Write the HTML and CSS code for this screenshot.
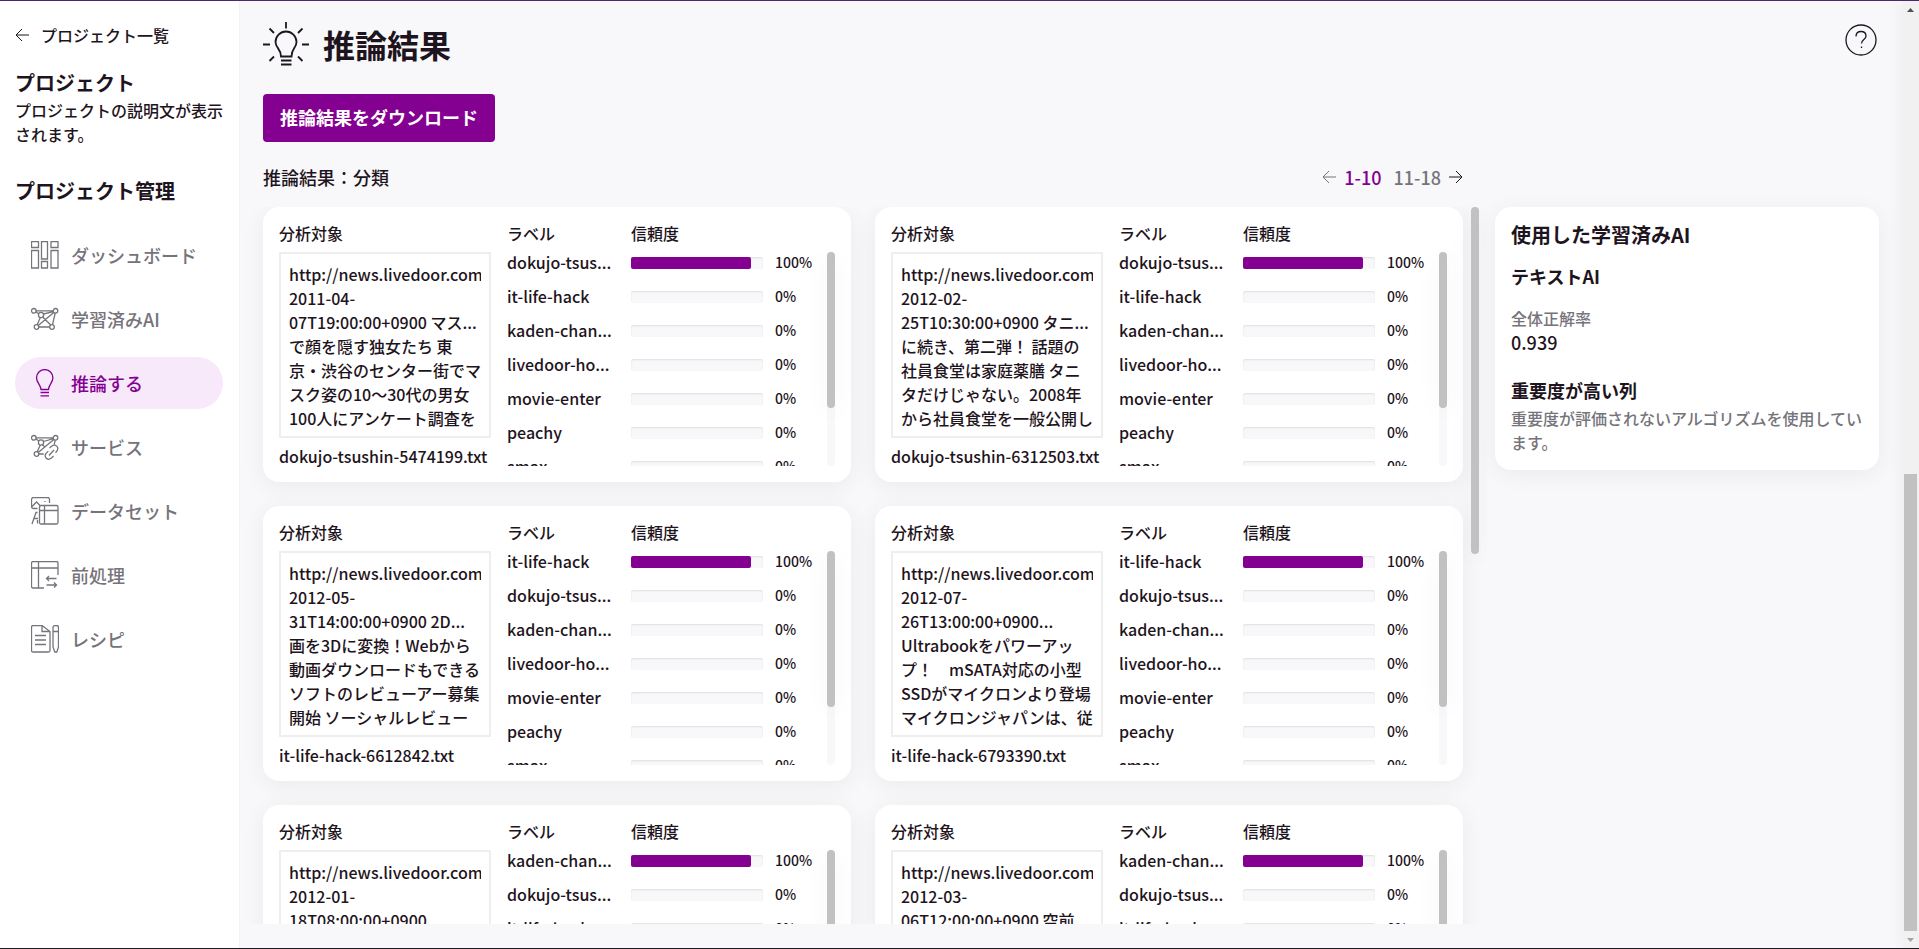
FILE: index.html
```html
<!DOCTYPE html>
<html lang="ja">
<head>
    <meta charset="UTF-8">
    <meta name="viewport" content="width=device-width, initial-scale=1.0">
    <link rel="stylesheet" href="styles.css">
    <title>推論結果</title>
</head>
<body>

<aside class="sidebar">
    <a class="back-link" href="#">
        <svg width="14" height="14" viewBox="0 0 14 14"><path d="M14 7H1M7 1L1 7l6 6"/></svg>
        <span>プロジェクト一覧</span>
    </a>
    <h2>プロジェクト</h2>
    <p>プロジェクトの説明文が表示されます。</p>
    <h2 class="nav-title">プロジェクト管理</h2>
    <nav>
        <a class="nav-item" href="#">
            <svg viewBox="0 0 28 28"><path d="M.5.5h7v6h-7zM.5 9.500h7v17.500h-7zM10.500.5h6v17.500h-6zM10.500 20.500h6v6.500h-6zM20 .5h7v6h-7zM20 9.500h7v17.500h-7z"/></svg>
            <span>ダッシュボード</span>
        </a>
        <a class="nav-item" href="#">
            <svg viewBox="0 0 28 28"><circle cx="2.800" cy="5.800" r="2.300"/><circle cx="24.500" cy="5.800" r="2.300"/><circle cx="10" cy="10" r="2.600"/><circle cx="5.500" cy="22" r="2.300"/><circle cx="21" cy="22" r="2.300"/><path d="M5 5.800h17M5 7l3 2M12.500 9l9.800-2.400M9.300 12.500L6.200 19.800M11.700 12l8 8M22.800 7.500L7.200 20.500M24.200 8l-2.700 11.700M7.800 22h11"/></svg>
            <span>学習済みAI</span>
        </a>
        <a class="nav-item active" href="#">
            <svg viewBox="0 0 28 28"><path d="M10 20.500C9.500 15.500 5.500 13.500 5.500 8.800a8.200 8.200 0 0 1 16.400 0C21.900 13.500 18 15.500 17.500 20.500zM9.500 23.500h8.500M9.500 26.800h8.500"/></svg>
            <span>推論する</span>
        </a>
        <a class="nav-item" href="#">
            <svg viewBox="0 0 28 28"><circle cx="2.800" cy="4.800" r="2.300"/><circle cx="24.500" cy="4.800" r="2.300"/><circle cx="10" cy="9.500" r="2.600"/><circle cx="5.500" cy="21" r="2.300"/><path d="M5 4.800h17M5 6l3 2M12.500 8.500l9.800-2.800M9.300 12L6.200 18.800M22.800 6.500L7.200 19.500M24.200 7.200l-1 4.500M11.500 11.800l2.500 2.500M7.800 21h5"/><path d="M18.500 15l1.800-1.500c3-2.500 6-1 6.500 1.500.3 2-.8 3.200-2.300 4.700M22.500 23l-2 2c-2 1.600-4 1.500-5.200.3-1.500-1.500-1.200-3.700 0-5.200l2-2M18 22.500l5-5.500"/></svg>
            <span>サービス</span>
        </a>
        <a class="nav-item" href="#">
            <svg viewBox="0 0 28 28"><path d="M6.500 11.500h-4a2 2 0 0 1-2-2v-7a2 2 0 0 1 2-2h14a2 2 0 0 1 2 2V6M1 9.500L5.500 5l4 4M14 4v1M1 27l4-11.500h1.500M3 21.500h4M6.500 23v3.500"/><rect x="8.500" y="8.500" width="18.500" height="18.500" rx="1.500"/><path d="M8.500 13.500h18.500M13.500 8.500v18.500"/></svg>
            <span>データセット</span>
        </a>
        <a class="nav-item" href="#">
            <svg viewBox="0 0 28 28"><path d="M13 27H2a1.500 1.500 0 0 1-1.500-1.500V2A1.500 1.500 0 0 1 2 .5h23.500A1.500 1.500 0 0 1 27 2v12M.5 7H27M7.500.5V27M25.500 17.500H15.500M18 15l-2.500 2.500L18 20M15.500 24H25.500M23 21.500l2.500 2.500-2.500 2.500"/></svg>
            <span>前処理</span>
        </a>
        <a class="nav-item" href="#">
            <svg viewBox="0 0 28 28"><path d="M11 .5H2A1.500 1.500 0 0 0 .5 2v23.500A1.500 1.500 0 0 0 2 27h15.500a1.500 1.500 0 0 0 1.500-1.500V6.500zM11 .5v6h8M4 10.500h11M4 15h11M4 19.500h11M22 2.500a2 2 0 0 1 2-2h1.500a2 2 0 0 1 2 2V22l-1.700 5h-2L22 22zM22 6.500h5.500"/></svg>
            <span>レシピ</span>
        </a>
    </nav>
</aside>

<main class="main">
    <header class="page-header">
        <svg class="title-icon" viewBox="0 0 46 46"><path d="M18 35.500C18 27.500 12.500 27 12.500 21a10.500 10.500 0 0 1 21 0C33.500 27 28.500 27.500 28.500 35.500zM18 39.500h10.500M18 43.500h10.500"/><path d="M23 1v6.500M6.500 7.500l4.500 4.500M39.500 7.500L35 12M0 23.500h7M39 23.500h7M6.500 40l4.500-4.500M39.500 40L35 35.500"/></svg>
        <h1>推論結果</h1>
        <button class="help" aria-label="ヘルプ">
            <svg width="36" height="36" viewBox="0 0 36 36"><circle cx="18" cy="18" r="15"/><path d="M13 14.500c0-3 2-5 5-5s5 1.800 5 4.500c0 3.500-4.500 3.500-4.500 7.500M18.500 24.500v1.500"/></svg>
        </button>
    </header>

    <div><button class="download">推論結果をダウンロード</button></div>

    <div class="columns">
        <section class="results">
            <div class="results-head">
                <span>推論結果：分類</span>
                <div class="pager">
                    <button class="prev" aria-label="前へ"><svg width="14" height="14" viewBox="0 0 14 14"><path d="M14 7H1M7 1L1 7l6 6"/></svg></button>
                    <a class="current" href="#">1-10</a>
                    <a href="#">11-18</a>
                    <button aria-label="次へ"><svg width="14" height="14" viewBox="0 0 14 14"><path d="M0 7h13M7 1l6 6-6 6"/></svg></button>
                </div>
            </div>
            <div class="results-scroll">
                <div class="cards" id="cards"></div>
                <div class="scroll-track outer"><div class="scroll-thumb"></div></div>
            </div>
        </section>

        <section class="model">
            <h2>使用した学習済みAI</h2>
            <h3>テキストAI</h3>
            <div class="sub">全体正解率</div>
            <div class="value">0.939</div>
            <h3 class="columns-title">重要度が高い列</h3>
            <p>重要度が評価されないアルゴリズムを使用しています。</p>
        </section>
    </div>
</main>

<div class="page-scroll">
    <svg width="17" height="17" viewBox="0 0 17 17"><path d="M5 11h7L8.500 7z" fill="#505050"/></svg>
    <div class="page-space"></div>
    <div class="page-thumb"></div>
    <svg width="17" height="17" viewBox="0 0 17 17"><path d="M5 7h7l-3.500 4z" fill="#a3a3a3"/></svg>
</div>

<script>
    const labels = ['dokujo-tsus...', 'it-life-hack', 'kaden-chan...', 'livedoor-ho...', 'movie-enter', 'peachy', 'smax'];

    const results = [
        { file: 'dokujo-tsushin-5474199.txt', label: 'dokujo-tsus...', lines: ['2011-04-', '07T19:00:00+0900 マス...', 'で顔を隠す独女たち 東', '京・渋谷のセンター街でマ', 'スク姿の10～30代の男女', '100人にアンケート調査を'] },
        { file: 'dokujo-tsushin-6312503.txt', label: 'dokujo-tsus...', lines: ['2012-02-', '25T10:30:00+0900 タニ...', 'に続き、第二弾！ 話題の', '社員食堂は家庭薬膳 タニ', 'タだけじゃない。2008年', 'から社員食堂を一般公開し'] },
        { file: 'it-life-hack-6612842.txt', label: 'it-life-hack', lines: ['2012-05-', '31T14:00:00+0900 2D...', '画を3Dに変換！Webから', '動画ダウンロードもできる', 'ソフトのレビューアー募集', '開始 ソーシャルレビュー'] },
        { file: 'it-life-hack-6793390.txt', label: 'it-life-hack', lines: ['2012-07-', '26T13:00:00+0900...', 'Ultrabookをパワーアッ', 'プ！　mSATA対応の小型', 'SSDがマイクロンより登場', 'マイクロンジャパンは、従'] },
        { file: '', label: 'kaden-chan...', lines: ['2012-01-', '18T08:00:00+0900'] },
        { file: '', label: 'kaden-chan...', lines: ['2012-03-', '06T12:00:00+0900 空前'] }
    ];

    function row(label, percent) {
        // a full bar stops short of the end of its track
        const fill = percent ? `<div class="fill" style="width: ${percent / 1.1}%"></div>` : '';
        return `<tr><td>${label}</td><td><div class="bar">${fill}</div></td><td class="percent">${percent}%</td></tr>`;
    }

    function card(result) {
        const rest = labels.filter(label => label !== result.label);
        return `
            <article class="card">
                <div class="target">
                    <div>分析対象</div>
                    <div class="target-box"><div class="target-text">http://news.livedoor.com<br>${result.lines.join('<br>')}</div></div>
                    <div>${result.file}</div>
                </div>
                <div class="scores">
                    <table>
                        <thead><tr><th class="col-label">ラベル</th><th class="col-bar">信頼度</th><th></th></tr></thead>
                        <tbody>${row(result.label, 100)}${rest.map(label => row(label, 0)).join('')}</tbody>
                    </table>
                </div>
                <div class="scroll-track"><div class="scroll-thumb"></div></div>
            </article>`;
    }

    document.getElementById('cards').innerHTML = results.map(card).join('');
</script>

</body>
</html>
```
FILE: styles.css
```css
* {
    box-sizing: border-box;
}

body {
    margin: 0;
    height: 100vh;
    display: flex;
    overflow: hidden;
    border-top: 1px solid #4b286d;
    border-bottom: 1px solid #1c1a1e;
    background: #f8f8fa;
    color: #1e1420;
    font-family: "Noto Sans CJK JP", sans-serif;
    font-size: 16px;
    font-weight: 500;
    line-height: 24px;
}

h1, h2, h3, p {
    margin: 0;
}

h2 {
    font-size: 20px;
    font-weight: 700;
}

h3 {
    font-size: 18px;
    font-weight: 700;
}

a {
    color: inherit;
    text-decoration: none;
}

button {
    padding: 0;
    border: 0;
    background: none;
    color: inherit;
    font-family: inherit;
    cursor: pointer;
}

svg {
    display: block;
    flex: none;
    fill: none;
    stroke: currentColor;
}

/* sidebar */
.sidebar {
    flex: none;
    width: 240px;
    padding: 22px 16px 0 15px;
    background: #fff;
    border-right: 1px solid #f3f3f5;
}

.back-link {
    display: flex;
    align-items: center;
    gap: 12px;
    margin-bottom: 24px;
}

.sidebar p {
    margin-top: 3px;
}

.sidebar .nav-title {
    margin: 33px 0 26px;
}

.nav-item {
    display: flex;
    align-items: center;
    gap: 12px;
    height: 52px;
    margin-bottom: 12px;
    padding-left: 16px;
    border-radius: 26px;
    color: #76737b;
    font-size: 18px;
}

.nav-item svg {
    width: 28px;
    height: 28px;
    stroke-width: 1.3;
}

.nav-item.active {
    background: #f7e8fa;
    color: #840091;
}

/* main area */
.main {
    flex: 1;
    min-width: 0;
    display: flex;
    flex-direction: column;
    padding: 20px 23px 24px;
}

.page-header {
    display: flex;
    align-items: center;
    gap: 14px;
    height: 46px;
    margin-bottom: 27px;
}

.title-icon {
    width: 46px;
    height: 46px;
    stroke-width: 1.8;
}

h1 {
    flex: 1;
    font-size: 32px;
    font-weight: 700;
}

.help svg {
    stroke-width: 1.3;
    margin-bottom: 8px;
}

.download {
    display: block;
    height: 48px;
    padding: 0 17px 2px;
    border-radius: 4px;
    background: #840091;
    color: #fff;
    font-size: 18px;
    font-weight: 700;
}

.columns {
    flex: 1;
    min-height: 0;
    display: flex;
    align-items: stretch;
    gap: 16px;
}

.results {
    flex: 1;
    min-width: 0;
    display: flex;
    flex-direction: column;
}

.results-head {
    display: flex;
    justify-content: space-between;
    padding: 23px 16px 18px 0;
    font-size: 18px;
}

.pager {
    display: flex;
    align-items: center;
    gap: 8px;
    color: #76737b;
}

.pager .current {
    margin-right: 4px;
    color: #840091;
}

.pager button {
    color: #1e1420;
}

.pager .prev {
    color: #76737b;
}

.results-scroll {
    flex: 1;
    min-height: 0;
    display: flex;
    gap: 8px;
    margin: 0 -8px 0 -23px;
    padding: 0 8px 0 23px;
    overflow: hidden;
}

.cards {
    flex: 1;
    display: grid;
    grid-template-columns: 1fr 1fr;
    grid-auto-rows: 275px;
    gap: 24px;
}

.card {
    display: flex;
    min-width: 0;
    padding: 16px;
    border-radius: 16px;
    background: #fff;
    box-shadow: 0 4px 24px rgba(0, 0, 0, 0.06);
}

.target {
    flex: none;
    width: 212px;
    margin-right: 16px;
    line-height: 20px;
    white-space: nowrap;
}

.target-box {
    height: 186px;
    margin: 9px 0 8px;
    padding: 8px;
    border: 2px solid #eee;
    line-height: 24px;
}

.target-text {
    overflow: hidden;
}

.scores {
    flex: 1;
    min-width: 0;
    overflow: hidden;
    line-height: 20px;
}

.scores table {
    width: 100%;
    table-layout: fixed;
    border-collapse: collapse;
}

.scores th {
    height: 29px;
    padding: 0;
    font-weight: 500;
    text-align: left;
    vertical-align: top;
}

.scores td {
    height: 34px;
    padding: 0;
    vertical-align: top;
}

.scores .col-label {
    width: 124px;
}

.scores .col-bar {
    width: 144px;
}

.bar {
    width: 132px;
    height: 12px;
    margin-top: 5px;
    border-radius: 2px;
    background: #f8f8fa;
    box-shadow: inset 0 1px 2px rgba(0, 0, 0, 0.1);
}

.fill {
    height: 100%;
    border-radius: 2px;
    background: #840091;
}

.scores .percent {
    font-size: 14px;
}

/* scrollbars */
.scroll-track {
    flex: none;
    width: 8px;
    margin-top: 29px;
    border-radius: 4px;
    background: #f8f8fa;
}

.scroll-thumb {
    height: 156px;
    border-radius: 4px;
    background: #c1c1c1;
    box-shadow: 0 4px 24px rgba(0, 0, 0, 0.06);
}

.scroll-track.outer {
    margin-top: 0;
    background: none;
}

.outer .scroll-thumb {
    height: 347px;
}

.page-scroll {
    flex: none;
    display: flex;
    flex-direction: column;
    width: 17px;
    background: #f1f1f1;
    box-shadow: 0 0 16px rgba(0, 0, 0, 0.06);
}

.page-scroll svg {
    stroke: none;
}

.page-space {
    flex: 456;
}

.page-thumb {
    flex: 457;
    margin: 0 2px;
    background: #c1c1c1;
}

/* model panel */
.model {
    flex: none;
    align-self: flex-start;
    width: 384px;
    margin: 65px 0 0;
    padding: 16px;
    border-radius: 16px;
    background: #fff;
    box-shadow: 0 4px 24px rgba(0, 0, 0, 0.06);
}

.model h3 {
    margin: 17px 0 18px;
}

.model .sub,
.model p {
    color: #76737b;
}

.model .value {
    font-size: 18px;
}

.model .columns-title {
    margin: 24px 0 4px;
}
```
